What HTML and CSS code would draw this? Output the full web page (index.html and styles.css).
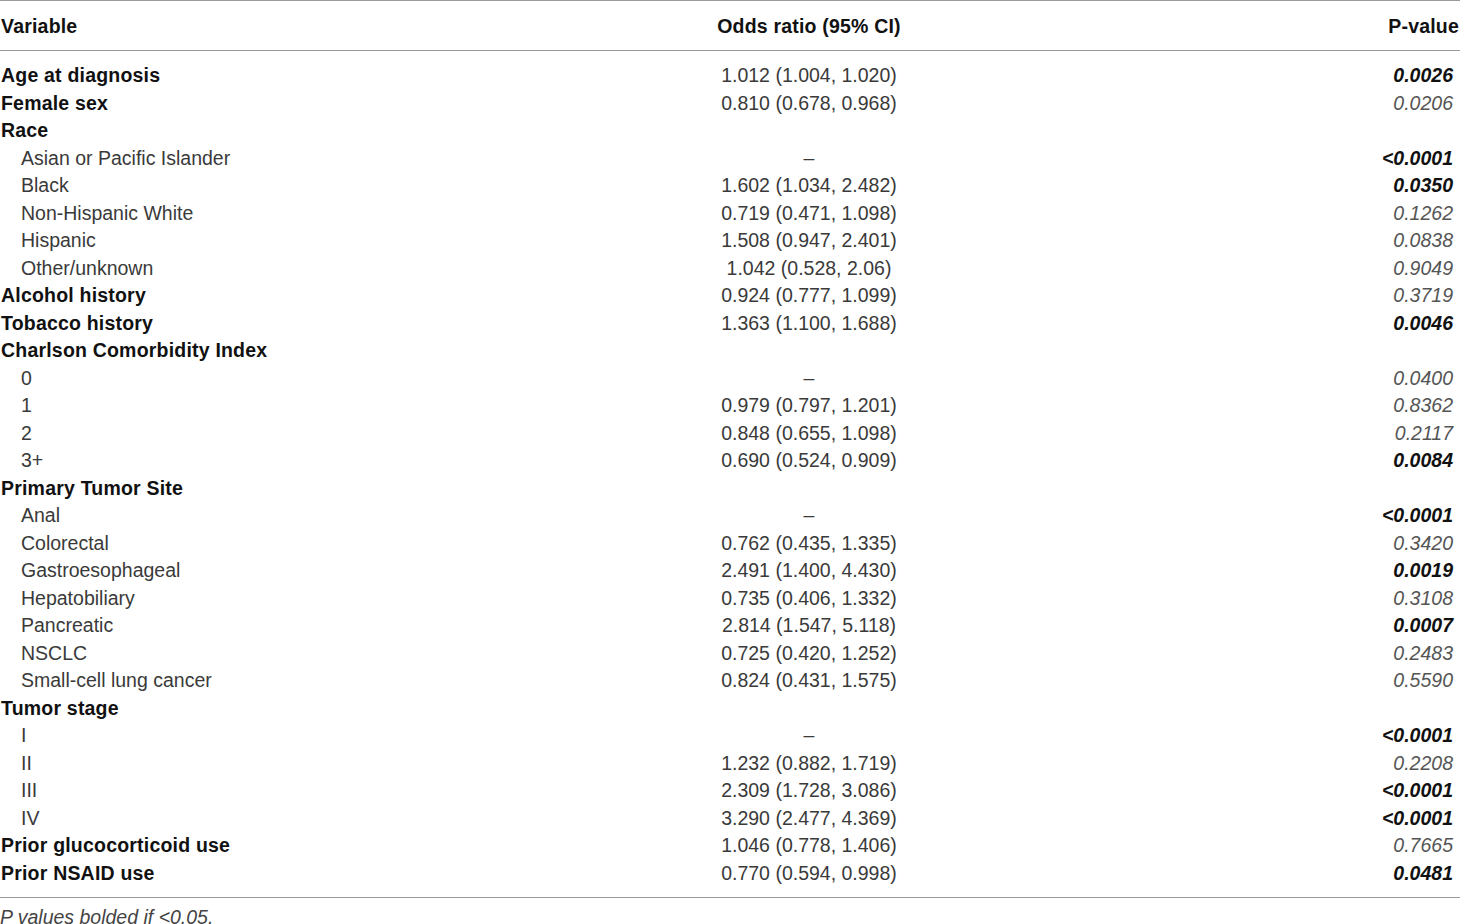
FILE: index.html
```html
<!DOCTYPE html>
<html>
<head>
<meta charset="utf-8">
<link rel="stylesheet" href="styles.css">
</head>
<body>
<table class="tbl">
  <colgroup>
    <col class="w1">
    <col class="w2">
    <col class="w3">
  </colgroup>
  <thead>
    <tr>
      <th class="c1">Variable</th>
      <th class="c2">Odds ratio (95% CI)</th>
      <th class="c3">P-value</th>
    </tr>
  </thead>
  <tbody>
    <tr class="first"><td class="c1 b">Age at diagnosis</td><td class="c2">1.012 (1.004, 1.020)</td><td class="c3 sig">0.0026</td></tr>
    <tr><td class="c1 b">Female sex</td><td class="c2">0.810 (0.678, 0.968)</td><td class="c3">0.0206</td></tr>
    <tr><td class="c1 b">Race</td><td class="c2"></td><td class="c3"></td></tr>
    <tr><td class="c1 ind">Asian or Pacific Islander</td><td class="c2">–</td><td class="c3 sig">&lt;0.0001</td></tr>
    <tr><td class="c1 ind">Black</td><td class="c2">1.602 (1.034, 2.482)</td><td class="c3 sig">0.0350</td></tr>
    <tr><td class="c1 ind">Non-Hispanic White</td><td class="c2">0.719 (0.471, 1.098)</td><td class="c3">0.1262</td></tr>
    <tr><td class="c1 ind">Hispanic</td><td class="c2">1.508 (0.947, 2.401)</td><td class="c3">0.0838</td></tr>
    <tr><td class="c1 ind">Other/unknown</td><td class="c2">1.042 (0.528, 2.06)</td><td class="c3">0.9049</td></tr>
    <tr><td class="c1 b">Alcohol history</td><td class="c2">0.924 (0.777, 1.099)</td><td class="c3">0.3719</td></tr>
    <tr><td class="c1 b">Tobacco history</td><td class="c2">1.363 (1.100, 1.688)</td><td class="c3 sig">0.0046</td></tr>
    <tr><td class="c1 b">Charlson Comorbidity Index</td><td class="c2"></td><td class="c3"></td></tr>
    <tr><td class="c1 ind">0</td><td class="c2">–</td><td class="c3">0.0400</td></tr>
    <tr><td class="c1 ind">1</td><td class="c2">0.979 (0.797, 1.201)</td><td class="c3">0.8362</td></tr>
    <tr><td class="c1 ind">2</td><td class="c2">0.848 (0.655, 1.098)</td><td class="c3">0.2117</td></tr>
    <tr><td class="c1 ind">3+</td><td class="c2">0.690 (0.524, 0.909)</td><td class="c3 sig">0.0084</td></tr>
    <tr><td class="c1 b">Primary Tumor Site</td><td class="c2"></td><td class="c3"></td></tr>
    <tr><td class="c1 ind">Anal</td><td class="c2">–</td><td class="c3 sig">&lt;0.0001</td></tr>
    <tr><td class="c1 ind">Colorectal</td><td class="c2">0.762 (0.435, 1.335)</td><td class="c3">0.3420</td></tr>
    <tr><td class="c1 ind">Gastroesophageal</td><td class="c2">2.491 (1.400, 4.430)</td><td class="c3 sig">0.0019</td></tr>
    <tr><td class="c1 ind">Hepatobiliary</td><td class="c2">0.735 (0.406, 1.332)</td><td class="c3">0.3108</td></tr>
    <tr><td class="c1 ind">Pancreatic</td><td class="c2">2.814 (1.547, 5.118)</td><td class="c3 sig">0.0007</td></tr>
    <tr><td class="c1 ind">NSCLC</td><td class="c2">0.725 (0.420, 1.252)</td><td class="c3">0.2483</td></tr>
    <tr><td class="c1 ind">Small-cell lung cancer</td><td class="c2">0.824 (0.431, 1.575)</td><td class="c3">0.5590</td></tr>
    <tr><td class="c1 b">Tumor stage</td><td class="c2"></td><td class="c3"></td></tr>
    <tr><td class="c1 ind">I</td><td class="c2">–</td><td class="c3 sig">&lt;0.0001</td></tr>
    <tr><td class="c1 ind">II</td><td class="c2">1.232 (0.882, 1.719)</td><td class="c3">0.2208</td></tr>
    <tr><td class="c1 ind">III</td><td class="c2">2.309 (1.728, 3.086)</td><td class="c3 sig">&lt;0.0001</td></tr>
    <tr><td class="c1 ind">IV</td><td class="c2">3.290 (2.477, 4.369)</td><td class="c3 sig">&lt;0.0001</td></tr>
    <tr><td class="c1 b">Prior glucocorticoid use</td><td class="c2">1.046 (0.778, 1.406)</td><td class="c3">0.7665</td></tr>
    <tr class="last"><td class="c1 b">Prior NSAID use</td><td class="c2">0.770 (0.594, 0.998)</td><td class="c3 sig">0.0481</td></tr>
  </tbody>
</table>
<p class="note">P values bolded if &lt;0.05.</p>
</body>
</html>
```
FILE: styles.css
```css
html, body {
  margin: 0;
  padding: 0;
  background: #fff;
}
body {
  font-family: "Liberation Sans", Arial, sans-serif;
  font-size: 19.5px;
  color: #3a3a3a;
  width: 1460px;
}
.tbl {
  width: 1460px;
  border-collapse: collapse;
  table-layout: fixed;
}
.w1 { width: 500px; }
.w2 { width: 616px; }
.w3 { width: 344px; }
.tbl th {
  font-weight: bold;
  color: #111;
  letter-spacing: 0.2px;
  height: 47px;
  padding: 2px 0 0 0;
  border-top: 1px solid #9a9a9a;
  border-bottom: 1px solid #9a9a9a;
  vertical-align: middle;
}
.tbl td {
  padding: 0;
  line-height: 27.5px;
  height: 27.5px;
  white-space: nowrap;
}
.tbl tr.first td { padding-top: 11px; }
.tbl tr.last td { padding-bottom: 10px; border-bottom: 1px solid #9a9a9a; }
.tbl .c1 { text-align: left; padding-left: 1px; }
.tbl .c2 { text-align: center; padding-left: 2px; }
.tbl .c3 { text-align: right; padding-right: 7px; }
.tbl th.c3 { padding-right: 1px; }
.tbl td.c3 { font-style: italic; color: #555; }
.tbl td.c3.sig { font-weight: bold; color: #111; }
.tbl td.b { font-weight: bold; color: #111; letter-spacing: 0.2px; }
.tbl td.ind { padding-left: 21px; }
.note {
  margin: 4px 0 0 0;
  font-style: italic;
  color: #444;
  line-height: 30px;
}
```
